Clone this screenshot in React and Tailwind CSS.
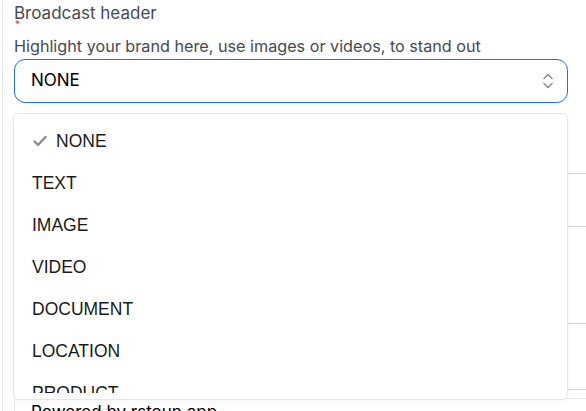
const options = ["NONE", "TEXT", "IMAGE", "VIDEO", "DOCUMENT", "LOCATION", "PRODUCT"];

function UpDown() {
  return (
    <svg width="14" height="18" viewBox="0 0 14 18" fill="none" stroke="#8a8f98" strokeWidth="1.6" strokeLinecap="round" strokeLinejoin="round">
      <path d="M3 6.5 7 2.5l4 4" />
      <path d="M3 11.5l4 4 4-4" />
    </svg>
  );
}

function Check() {
  return (
    <svg width="14" height="12" viewBox="0 0 14 12" fill="none" stroke="#8c8c8c" strokeWidth="2.4" strokeLinecap="round" strokeLinejoin="round">
      <path d="M1.5 6.5 5 10l7.5-8" />
    </svg>
  );
}

export default function App() {
  return (
    <div className="relative w-[586px] h-[411px] overflow-hidden bg-white font-['Inter','Liberation_Sans',sans-serif]">
      <div className="ml-[2px] h-full border-l border-gray-200 pl-[11px]">
        {/* Header field */}
        <div className="relative pt-[2px] text-[17px] leading-[22px] text-[#464b53]">
          Broadcast header
          <span className="absolute left-[1px] top-[19px] text-[10px] leading-none text-red-500">*</span>
        </div>
        <p className="mt-[12px] text-[16.2px] leading-[20px] text-[#454a52]">
          Highlight your brand here, use images or videos, to stand out
        </p>
        <div className="mt-[3px] flex h-[44px] w-[554px] items-center justify-between rounded-[11px] border border-[#1a73e8] pl-[16px] pr-[12px]">
          <span className="text-[17px] text-black">NONE</span>
          <UpDown />
        </div>

        {/* Content behind the menu */}
        <div className="w-[600px]">
          <div className="h-[71px] border-b border-gray-300" />
          <div className="h-[53px] border-b border-gray-300" />
          <div className="h-[97px] border-b border-gray-300" />
          <div className="h-[66px] border-b border-gray-300" />
          <div className="mt-[8px] border-l border-t border-gray-200 pl-[16px] pt-[1px] text-[17px] text-black">
            Powered by rstoun.app
          </div>
        </div>
      </div>

      {/* Open menu */}
      <div className="absolute left-[13px] top-[113px] h-[287px] w-[555px] rounded-[6px] border border-gray-200 bg-white py-[6px] shadow-[0_2px_6px_rgba(0,0,0,0.04)]">
        <div className="h-full overflow-hidden">
          {options.map((o, i) => (
            <div key={o} className="flex h-[42px] items-center pl-[18px] text-[17.5px] text-[#1a1a1a] font-['Liberation_Sans','Inter',sans-serif]">
              {i === 0 ? (
                <>
                  <span className="ml-[1px] mr-[9px] flex"><Check /></span>
                  {o}
                </>
              ) : (
                o
              )}
            </div>
          ))}
        </div>
      </div>
    </div>
  );
}
